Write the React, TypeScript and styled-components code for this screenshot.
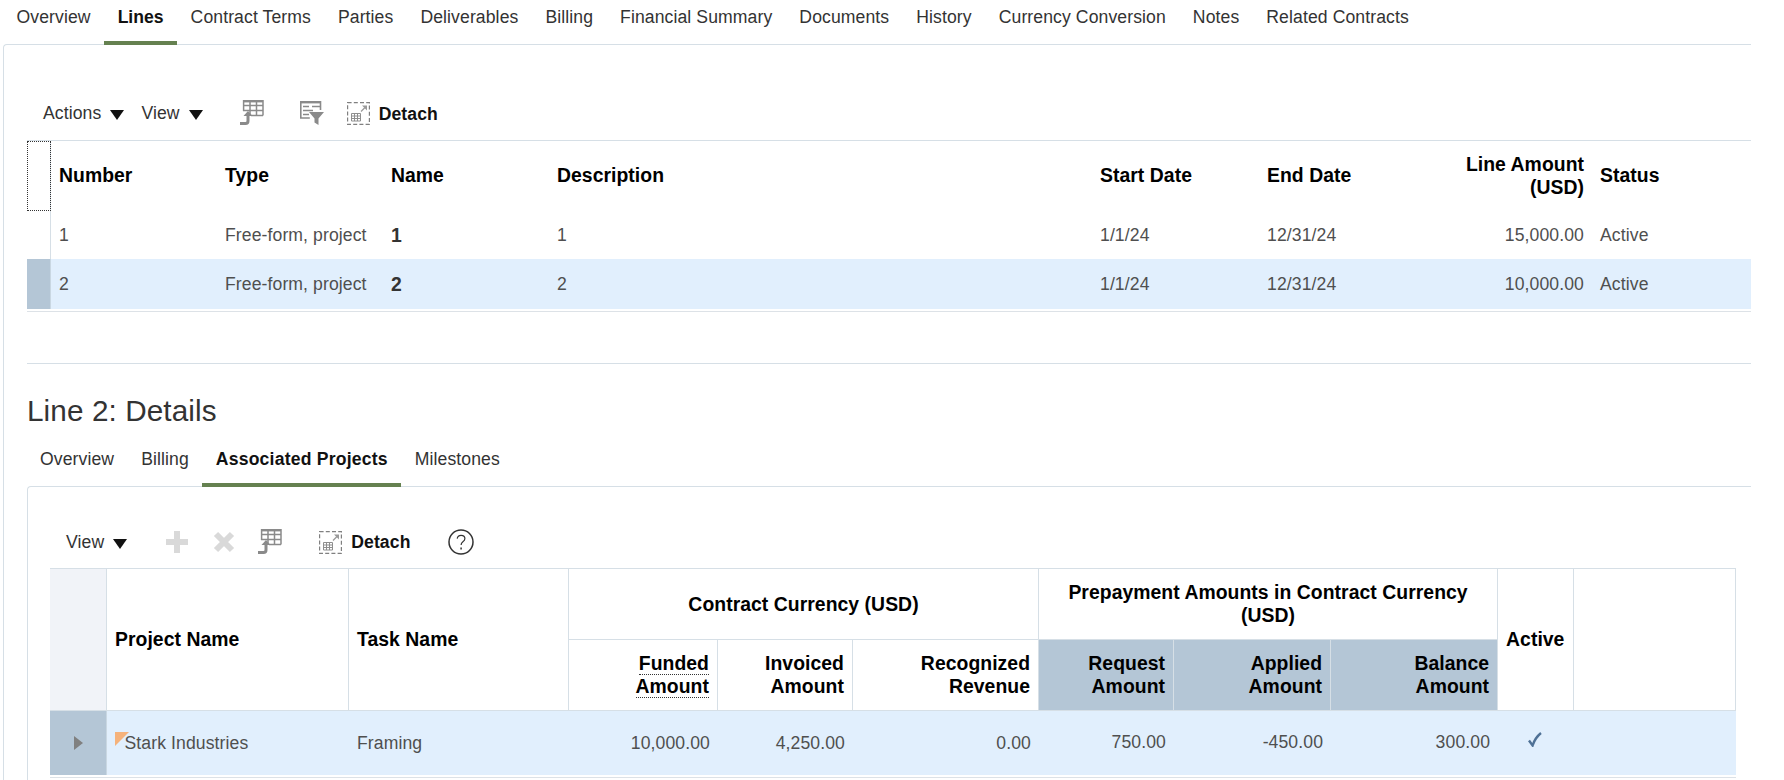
import React from "react";
import styled, { createGlobalStyle } from "styled-components";

const LINE = "#d6dfe6";
const SELECTED = "#e1effd";
const SELECTOR = "#b4c6d6";

const GlobalStyle = createGlobalStyle`
  html, body {
    margin: 0;
    padding: 0;
    background: #fff;
    overflow: hidden;
  }
  body {
    font-family: "Liberation Sans", Arial, sans-serif;
    font-size: 17.6px;
    letter-spacing: 0.1px;
    color: #333;
  }
`;

const Page = styled.div`
  width: 1751px;
  height: 780px;
  display: flex;
  flex-direction: column;
  overflow: hidden;
`;

const Tabs = styled.div<{ $left: number }>`
  display: flex;
  flex: none;
  padding-left: ${p => Math.max(p.$left, 0)}px;
  margin-left: ${p => Math.min(p.$left, 0)}px;
  margin-bottom: -1px;
  position: relative;
  z-index: 1;
`;

const Tab = styled.div<{ $active?: boolean }>`
  padding: 0 13.5px 7px;
  line-height: 34px;
  height: 45px;
  box-sizing: border-box;
  white-space: nowrap;
  color: ${p => (p.$active ? "#111" : "#333")};
  font-weight: ${p => (p.$active ? "bold" : "normal")};
  letter-spacing: ${p => (p.$active ? "0" : "0.1px")};
  border-bottom: 4px solid ${p => (p.$active ? "#658150" : "transparent")};
`;

const SubTab = styled(Tab)`
  letter-spacing: ${p => (p.$active ? "0.2px" : "0.1px")};
`;

const Panel = styled.div<{ $left: number; $pad: number }>`
  flex: 1;
  display: flex;
  flex-direction: column;
  margin-left: ${p => p.$left}px;
  padding-left: ${p => p.$pad}px;
  border-top: 1px solid ${LINE};
  border-left: 1px solid ${LINE};
  border-top-left-radius: 4px;
`;

const Toolbar = styled.div<{ $top: number; $bottom: number }>`
  display: flex;
  align-items: center;
  flex: none;
  height: 28px;
  padding: ${p => p.$top}px 0 ${p => p.$bottom}px 16px;
`;

const Tool = styled.div<{ $ml?: number }>`
  display: flex;
  align-items: center;
  gap: 9px;
  margin-left: ${p => p.$ml ?? 0}px;
`;

const DownArrow = styled.span`
  width: 0;
  height: 0;
  margin-top: 4px;
  border-left: 7px solid transparent;
  border-right: 7px solid transparent;
  border-top: 10px solid #111;
`;

const DetachLabel = styled.span<{ $drop?: boolean }>`
  font-weight: bold;
  color: #111;
  margin-top: ${p => (p.$drop ? "2px" : "0")};
`;

const Grid = styled.table<{ $width: number }>`
  width: ${p => p.$width}px;
  flex: none;
  table-layout: fixed;
  border-collapse: separate;
  border-spacing: 0;
`;

const HeadCell = styled.th<{ $align?: string; $height?: number; $fill?: string }>`
  box-sizing: border-box;
  padding: 0 8px;
  height: ${p => (p.$height ? `${p.$height}px` : "auto")};
  font-size: 19.36px;
  line-height: 23px;
  letter-spacing: 0.05px;
  font-weight: bold;
  color: #000;
  text-align: ${p => p.$align ?? "left"};
  background: ${p => p.$fill ?? "transparent"};
`;

const PlainHead = styled(HeadCell)`
  border-top: 1px solid ${LINE};
`;

const FocusCell = styled.th`
  box-sizing: border-box;
  position: relative;
  padding: 0;
  height: 70px;
  border-top: 1px solid ${LINE};
  border-right: 1px solid ${LINE};
  &::before {
    content: "";
    position: absolute;
    inset: 0 -1px -1px 0;
    border: 1px dotted #333;
  }
`;

const GridHead = styled(HeadCell)<{ $top?: boolean }>`
  border-right: 1px solid ${LINE};
  border-bottom: 1px solid ${LINE};
  border-top: ${p => (p.$top ? `1px solid ${LINE}` : "0")};
`;

const Row = styled.tr<{ $selected?: boolean; $height: number; $lowered?: boolean }>`
  height: ${p => p.$height}px;
  background: ${p => (p.$selected ? SELECTED : "transparent")};
  > td {
    padding-top: ${p => (p.$lowered ? "2px" : "0")};
  }
`;

const Cell = styled.td<{ $align?: string; $raised?: boolean }>`
  box-sizing: border-box;
  padding: 0 8px ${p => (p.$raised ? "2px" : "0")};
  color: #4f4f4f;
  white-space: nowrap;
  text-align: ${p => p.$align ?? "left"};
`;

const StrongCell = styled(Cell)`
  font-size: 19.36px;
  font-weight: bold;
  color: #333;
`;

const FlagCell = styled(Cell)`
  position: relative;
  padding-left: 17.5px;
`;

const Flag = styled.span`
  position: absolute;
  left: 8px;
  top: 21px;
  width: 0;
  height: 0;
  border-top: 14px solid #f5b27b;
  border-right: 14px solid transparent;
`;

const SelectorCell = styled.td<{ $selected?: boolean }>`
  box-sizing: border-box;
  padding: 0;
  background: ${p => (p.$selected ? SELECTOR : "transparent")};
  border-right: 1px solid ${p => (p.$selected ? "#c9d7e2" : LINE)};
`;

const ExpandArrow = styled.span`
  display: block;
  width: 0;
  height: 0;
  margin-left: 24px;
  border-top: 7.5px solid transparent;
  border-bottom: 7.5px solid transparent;
  border-left: 9px solid #808080;
`;

const CheckCell = styled(Cell)`
  padding-left: 30px;
  svg {
    display: block;
    margin-bottom: 7px;
  }
`;

const Dotted = styled.span`
  border-bottom: 1px dotted #333;
`;

const RowRule = styled.div<{ $width?: number; $gap: number }>`
  flex: none;
  height: 1px;
  width: ${p => (p.$width ? `${p.$width}px` : "auto")};
  margin-top: ${p => p.$gap}px;
  background: #dde2e7;
`;

const Divider = styled.div`
  flex: none;
  height: 1px;
  margin-top: 51px;
  background: ${LINE};
`;

const Heading = styled.h2`
  flex: none;
  margin: 29px 0 13px;
  height: 36px;
  line-height: 36px;
  font-size: 29.7px;
  font-weight: normal;
  color: #333;
`;

const GREY = "#8a8a8a";

const TableArrowIcon = () => (
  <svg width="24" height="26" viewBox="0 0 24 26" fill="none">
    <path d="M3 1.200h20" stroke={GREY} strokeWidth="2.400" />
    <path d="M3.600 0v11M10 0v15.500M16.500 0v15.500M23 0v15.500M3 5.500h20M3 10.500h20M11 15.500h12" stroke={GREY} strokeWidth="1.500" />
    <path d="M0 23.500h5.500q2.500 0 2.500-2.500v-6" stroke={GREY} strokeWidth="3" />
    <path d="M3.500 16L8 11l4.500 5z" fill={GREY} />
  </svg>
);

const FilterTableIcon = () => (
  <svg width="24" height="24" viewBox="0 0 24 24" fill="none">
    <path d="M0 1.200h21" stroke={GREY} strokeWidth="2.400" />
    <path d="M.8 0v17h9M20.500 0v9M3 5.500h6M12 5.500h9M3 9.500h10M3 13.500h6" stroke={GREY} strokeWidth="1.600" />
    <path d="M9 11h15l-5.500 6.500V24l-4-2.500v-4z" fill={GREY} />
  </svg>
);

const DetachIcon = () => (
  <svg width="23" height="23" viewBox="0 0 23 23" fill="none">
    <rect x=".6" y=".6" width="21.800" height="21.800" stroke="#808080" strokeWidth="1.200" strokeDasharray="4 2.200" />
    <path d="M4.500 11.500h9v7.500h-9zM4.500 14h9M4.500 16.500h9M7.500 11.500V19M10.500 11.500V19" stroke="#8e8e8e" strokeWidth="1" />
    <path d="M14 9.500L18.500 5" stroke="#9a9a9a" strokeWidth="1.300" />
    <path d="M15 3.500h5v5z" fill="#9a9a9a" />
  </svg>
);

const PlusIcon = () => (
  <svg width="22" height="22" viewBox="0 0 22 22">
    <path d="M11 0v22M0 11h22" stroke="#d9d9d9" strokeWidth="6" />
  </svg>
);

const CrossIcon = () => (
  <svg width="22" height="22" viewBox="0 0 22 22">
    <path d="M3 3l16 16M19 3L3 19" stroke="#d9d9d9" strokeWidth="6" />
  </svg>
);

const HelpIcon = () => (
  <svg width="26" height="26" viewBox="0 0 26 26" fill="none">
    <circle cx="13" cy="13" r="12" stroke="#333" strokeWidth="1.500" />
    <path d="M9.200 9.600c.3-2.200 1.900-3.300 3.900-3.300 2.200 0 3.800 1.300 3.800 3.200 0 1.600-.9 2.400-2 3.200-1.100.8-1.800 1.500-1.800 3.200" stroke="#333" strokeWidth="1.200" />
    <path d="M13.100 18.400v2" stroke="#333" strokeWidth="1.500" />
  </svg>
);

const CheckIcon = () => (
  <svg width="14" height="15" viewBox="0 0 14 15" fill="none">
    <path d="M1 8.500l3.600 5C6 9 9 4.200 13 1" stroke="#4f7196" strokeWidth="2.400" />
  </svg>
);

const topTabs = [
  "Overview",
  "Lines",
  "Contract Terms",
  "Parties",
  "Deliverables",
  "Billing",
  "Financial Summary",
  "Documents",
  "History",
  "Currency Conversion",
  "Notes",
  "Related Contracts",
];
const subTabs = ["Overview", "Billing", "Associated Projects", "Milestones"];

const lineRows = [
  { number: "1", name: "1", amount: "15,000.00", height: 49, selected: false },
  { number: "2", name: "2", amount: "10,000.00", height: 50, selected: true },
];

export default function App() {
  return (
    <Page>
      <GlobalStyle />
      <Tabs $left={3}>
        {topTabs.map(t => (
          <Tab key={t} $active={t === "Lines"}>
            {t}
          </Tab>
        ))}
      </Tabs>
      <Panel $left={3} $pad={23}>
        <Toolbar $top={54} $bottom={13}>
          <Tool>
            Actions <DownArrow />
          </Tool>
          <Tool $ml={17}>
            View <DownArrow />
          </Tool>
          <Tool $ml={37}>
            <TableArrowIcon />
          </Tool>
          <Tool $ml={36}>
            <FilterTableIcon />
          </Tool>
          <Tool $ml={23}>
            <DetachIcon />
            <DetachLabel $drop>Detach</DetachLabel>
          </Tool>
        </Toolbar>
        <Grid $width={1724}>
          <colgroup>
            {[24, 166, 166, 166, 543, 167, 167, 166, 159].map((w, i) => (
              <col key={i} width={w} />
            ))}
          </colgroup>
          <thead>
            <tr>
              <FocusCell />
              <PlainHead $height={70}>Number</PlainHead>
              <PlainHead>Type</PlainHead>
              <PlainHead>Name</PlainHead>
              <PlainHead>Description</PlainHead>
              <PlainHead>Start Date</PlainHead>
              <PlainHead>End Date</PlainHead>
              <PlainHead $align="right">Line Amount (USD)</PlainHead>
              <PlainHead>Status</PlainHead>
            </tr>
          </thead>
          <tbody>
            {lineRows.map(r => (
              <Row key={r.number} $height={r.height} $selected={r.selected} $lowered={!r.selected}>
                <SelectorCell $selected={r.selected} />
                <Cell>{r.number}</Cell>
                <Cell>Free-form, project</Cell>
                <StrongCell>{r.name}</StrongCell>
                <Cell>{r.number}</Cell>
                <Cell>1/1/24</Cell>
                <Cell>12/31/24</Cell>
                <Cell $align="right">{r.amount}</Cell>
                <Cell>Active</Cell>
              </Row>
            ))}
          </tbody>
        </Grid>
        <RowRule $gap={2} />
        <Divider />
        <Heading>Line 2: Details</Heading>
        <Tabs $left={-0.5}>
          {subTabs.map(t => (
            <SubTab key={t} $active={t === "Associated Projects"}>
              {t}
            </SubTab>
          ))}
        </Tabs>
        <Panel $left={0} $pad={22}>
          <Toolbar $top={41} $bottom={12}>
            <Tool>
              View <DownArrow />
            </Tool>
            <Tool $ml={39}>
              <PlusIcon />
            </Tool>
            <Tool $ml={25}>
              <CrossIcon />
            </Tool>
            <Tool $ml={23}>
              <TableArrowIcon />
            </Tool>
            <Tool $ml={37}>
              <DetachIcon />
              <DetachLabel>Detach</DetachLabel>
            </Tool>
            <Tool $ml={37}>
              <HelpIcon />
            </Tool>
          </Toolbar>
          <Grid $width={1686}>
            <colgroup>
              {[57, 242, 220, 149, 135, 186, 135, 157, 167, 76, 162].map((w, i) => (
                <col key={i} width={w} />
              ))}
            </colgroup>
            <thead>
              <tr>
                <GridHead $top rowSpan={2} $fill="#f1f3f8" />
                <GridHead $top rowSpan={2}>
                  Project Name
                </GridHead>
                <GridHead $top rowSpan={2}>
                  Task Name
                </GridHead>
                <GridHead $top colSpan={3} $align="center" $height={72}>
                  Contract Currency (USD)
                </GridHead>
                <GridHead $top colSpan={3} $align="center">
                  Prepayment Amounts in Contract Currency (USD)
                </GridHead>
                <GridHead $top rowSpan={2}>
                  Active
                </GridHead>
                <GridHead $top rowSpan={2} />
              </tr>
              <tr>
                <GridHead $align="right" $height={71}>
                  <Dotted>
                    Funded
                    <br />
                    Amount
                  </Dotted>
                </GridHead>
                <GridHead $align="right">
                  Invoiced
                  <br />
                  Amount
                </GridHead>
                <GridHead $align="right">
                  Recognized
                  <br />
                  Revenue
                </GridHead>
                <GridHead $align="right" $fill={SELECTOR}>
                  Request
                  <br />
                  Amount
                </GridHead>
                <GridHead $align="right" $fill={SELECTOR}>
                  Applied
                  <br />
                  Amount
                </GridHead>
                <GridHead $align="right" $fill={SELECTOR}>
                  Balance
                  <br />
                  Amount
                </GridHead>
              </tr>
            </thead>
            <tbody>
              <Row $height={64} $selected>
                <SelectorCell $selected>
                  <ExpandArrow />
                </SelectorCell>
                <FlagCell>
                  <Flag />
                  Stark Industries
                </FlagCell>
                <Cell>Framing</Cell>
                <Cell $align="right">10,000.00</Cell>
                <Cell $align="right">4,250.00</Cell>
                <Cell $align="right">0.00</Cell>
                <Cell $align="right" $raised>
                  750.00
                </Cell>
                <Cell $align="right" $raised>
                  -450.00
                </Cell>
                <Cell $align="right" $raised>
                  300.00
                </Cell>
                <CheckCell>
                  <CheckIcon />
                </CheckCell>
                <Cell />
              </Row>
            </tbody>
          </Grid>
          <RowRule $gap={2} $width={1686} />
        </Panel>
      </Panel>
    </Page>
  );
}
